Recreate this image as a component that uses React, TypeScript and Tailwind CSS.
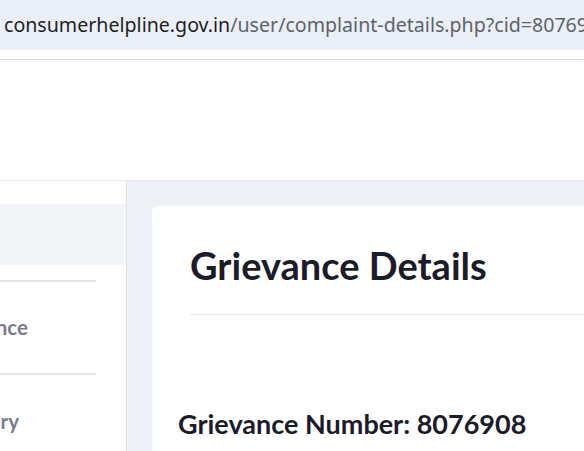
export default function App() {
  return (
    <div className="flex h-[451px] w-[584px] flex-col overflow-hidden bg-white">
      {/* address bar */}
      <div className="flex h-[50px] shrink-0 items-center bg-[#ebeff8] pl-[4px] font-['Noto_Sans',sans-serif] text-[19.6px] whitespace-nowrap">
        <span className="text-[#1f1f1f]">consumerhelpline.gov.in</span>
        <span className="text-[#5f6368]">/user/complaint-details.php?cid=8076951</span>
      </div>
      <div className="h-[10px] shrink-0 border-b border-[#dcdde0] bg-white" />

      {/* site header */}
      <div className="h-[121px] shrink-0 border-b border-[#e6e8ee] bg-white" />

      <div className="flex min-h-0 flex-1 font-['Lato',sans-serif]">
        {/* sidebar */}
        <aside className="w-[127px] shrink-0 border-r border-[#e1e4ea] bg-white pt-[23px]">
          <div className="h-[61px] bg-[#f3f4f7]" />
          <div className="mt-[15px] h-[2px] w-[96px] bg-[#e3e4e8]" />
          <div className="flex h-[91px] w-[28px] items-center justify-end overflow-hidden whitespace-nowrap text-[20.5px] font-bold text-[#7b7994]">
            <span>Register Grievance</span>
          </div>
          <div className="h-[2px] w-[96px] bg-[#e3e4e8]" />
          <div className="flex h-[93px] w-[19px] items-center justify-end overflow-hidden whitespace-nowrap text-[20.5px] font-bold text-[#7b7994]">
            <span>Grievance History</span>
          </div>
        </aside>

        {/* main */}
        <main className="flex-1 bg-[#edf0f5] pl-[25px] pt-[25px]">
          <div className="h-full rounded-tl-[6px] bg-white pl-[26px] pt-[35px] text-[#1c1b2a]">
            <h1 className="ml-[12px] text-[38px] leading-[48px] font-bold">Grievance Details</h1>
            <div className="mt-[25px] ml-[12px] h-px bg-[#e4e6ea]" />
            <p className="mt-[94px] text-[27px] leading-[30px] font-bold">Grievance Number: 8076908</p>
          </div>
        </main>
      </div>
    </div>
  )
}
